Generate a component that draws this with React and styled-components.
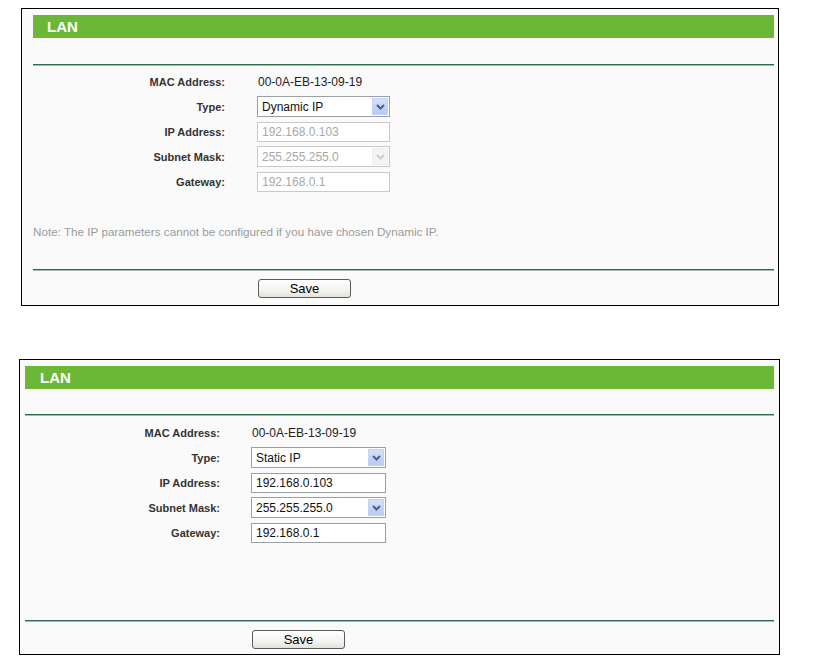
import styled, { createGlobalStyle } from "styled-components";

const GlobalStyle = createGlobalStyle`
  body {
    margin: 0;
    background: #ffffff;
    font-family: "Liberation Sans", Arial, sans-serif;
  }
`;

const Page = styled.div`
  display: flex;
  flex-direction: column;
  gap: 53px;
  padding-top: 8px;
`;

const Panel = styled.div`
  box-sizing: border-box;
  margin-left: ${(p) => p.$left}px;
  width: ${(p) => p.$width}px;
  height: ${(p) => p.$height}px;
  border: 1px solid #000;
  background: #fafafa;
  display: flex;
  flex-direction: column;
  padding: 6px ${(p) => p.$padRight}px 0 ${(p) => p.$padLeft}px;
`;

const TitleBar = styled.div`
  height: 23px;
  background: #6bb836;
  color: #fff;
  font-weight: bold;
  font-size: 15px;
  line-height: 23px;
  padding-left: ${(p) => p.$indent}px;
`;

const Rule = styled.div`
  height: 1px;
  background: #2f6b4a;
  border-bottom: 1px solid #9cbfa9;
  margin-top: ${(p) => p.$top}px;
`;

const Form = styled.div`
  display: grid;
  grid-template-columns: ${(p) => p.$labelWidth}px ${(p) => p.$inputWidth}px;
  column-gap: ${(p) => p.$gap}px;
  grid-auto-rows: 25px;
  align-items: center;
  margin-top: ${(p) => p.$top}px;
`;

const Label = styled.div`
  text-align: right;
  font-size: 11px;
  font-weight: bold;
  color: #333;
`;

const Value = styled.div`
  font-size: 12px;
  color: #222;
  padding-left: 1px;
`;

const Field = styled.div`
  box-sizing: border-box;
  height: 20px;
  border: 1px solid ${(p) => (p.$disabled ? "#c9c9c9" : "#9aa0a6")};
  background: #fff;
  font-size: 12px;
  line-height: 18px;
  padding-left: 4px;
  color: ${(p) => (p.$disabled ? "#a8a8a8" : "#111")};
  display: flex;
  align-items: center;
  justify-content: space-between;
`;

const SelectBox = styled(Field)`
  height: 21px;
  padding-right: 1px;
`;

const Arrow = styled.span`
  width: 16px;
  height: 17px;
  display: flex;
  align-items: center;
  justify-content: center;
  background: ${(p) =>
    p.$disabled
      ? "#f4f4f4"
      : "linear-gradient(#d4e0fb, #b8c9f2)"};
  border: 1px solid ${(p) => (p.$disabled ? "#eeeeee" : "#c3d2f5")};
  box-sizing: border-box;
`;

const Note = styled.div`
  font-size: 11.7px;
  color: #9a9a9a;
  margin-top: 31px;
`;

const Footer = styled.div`
  margin-top: auto;
  display: flex;
  flex-direction: column;
`;

const ButtonRow = styled.div`
  padding: 8px 0 ${(p) => p.$bottom}px ${(p) => p.$offset}px;
`;

const SaveButton = styled.button`
  box-sizing: border-box;
  width: 93px;
  height: 19px;
  border: 1px solid #5a5a5a;
  border-radius: 3px;
  background: linear-gradient(#ffffff, #f1f1ec 70%, #e2e2dc);
  font-family: "Liberation Sans", Arial, sans-serif;
  font-size: 13px;
  color: #000;
  padding: 0;
  line-height: 16px;
`;

function Chevron({ disabled }) {
  return (
    <svg width="9" height="6" viewBox="0 0 9 6">
      <path
        d="M1 1 L4.5 4.5 L8 1"
        fill="none"
        stroke={disabled ? "#d0d0d0" : "#4b5f86"}
        strokeWidth="2"
      />
    </svg>
  );
}

function Select({ value, disabled }) {
  return (
    <SelectBox $disabled={disabled}>
      <span>{value}</span>
      <Arrow $disabled={disabled}>
        <Chevron disabled={disabled} />
      </Arrow>
    </SelectBox>
  );
}

function LanPanel({ geo, type, disabled, note }) {
  return (
    <Panel
      $left={geo.left}
      $width={geo.width}
      $height={geo.height}
      $padLeft={geo.padLeft}
      $padRight={geo.padRight}
    >
      <TitleBar $indent={geo.indent}>LAN</TitleBar>
      <Rule $top={geo.ruleTop} />
      <Form
        $labelWidth={geo.labelWidth}
        $inputWidth={geo.inputWidth}
        $gap={geo.gap}
        $top={geo.formTop}
      >
        <Label>MAC Address:</Label>
        <Value>00-0A-EB-13-09-19</Value>
        <Label>Type:</Label>
        <Select value={type} />
        <Label>IP Address:</Label>
        <Field $disabled={disabled}>192.168.0.103</Field>
        <Label>Subnet Mask:</Label>
        <Select value="255.255.255.0" disabled={disabled} />
        <Label>Gateway:</Label>
        <Field $disabled={disabled}>192.168.0.1</Field>
      </Form>
      {note && <Note>{note}</Note>}
      <Footer>
        <Rule $top={0} />
        <ButtonRow $offset={geo.labelWidth + geo.gap + 1} $bottom={geo.buttonBottom}>
          <SaveButton>Save</SaveButton>
        </ButtonRow>
      </Footer>
    </Panel>
  );
}

const dynamicGeo = {
  left: 21,
  width: 758,
  height: 298,
  padLeft: 11,
  padRight: 4,
  indent: 14,
  ruleTop: 26,
  labelWidth: 192,
  inputWidth: 133,
  gap: 32,
  formTop: 3,
  buttonBottom: 7,
};

const staticGeo = {
  left: 19,
  width: 761,
  height: 296,
  padLeft: 5,
  padRight: 5,
  indent: 15,
  ruleTop: 25,
  labelWidth: 195,
  inputWidth: 135,
  gap: 31,
  formTop: 4,
  buttonBottom: 5,
};

export default function App() {
  return (
    <>
      <GlobalStyle />
      <Page>
        <LanPanel
          geo={dynamicGeo}
          type="Dynamic IP"
          disabled
          note="Note: The IP parameters cannot be configured if you have chosen Dynamic IP."
        />
        <LanPanel geo={staticGeo} type="Static IP" />
      </Page>
    </>
  );
}
